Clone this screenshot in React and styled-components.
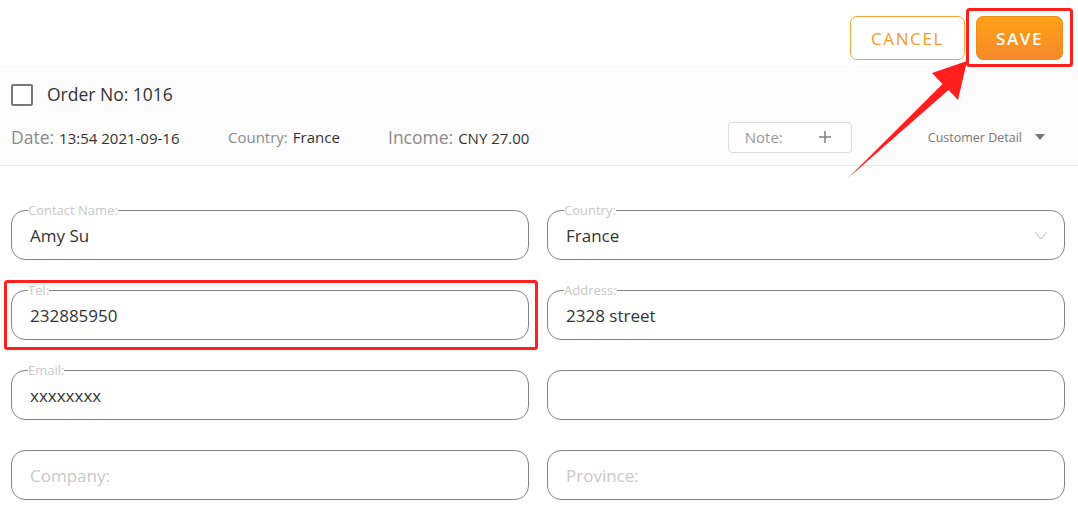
import React from "react";
import styled, { createGlobalStyle } from "styled-components";

const Global = createGlobalStyle`
  html, body { margin: 0; padding: 0; background: #fff; }
  body { font-family: "Open Sans", "Noto Sans", Arial, sans-serif; color: #333; }
  * { box-sizing: border-box; }
`;

const Page = styled.div`
  position: relative;
  width: 1078px;
  height: 511px;
  overflow: hidden;
  background: #fff;
`;

const TopBar = styled.div`
  height: 65px;
  display: flex;
  align-items: flex-start;
  justify-content: flex-end;
  gap: 11px;
  padding: 16px 15px 0 0;
  background: #fff;
`;

const Button = styled.button`
  height: 44px;
  width: ${(p) => p.$w}px;
  border-radius: 7px;
  font-family: "Open Sans", sans-serif;
  font-size: 17px;
  letter-spacing: 1.6px;
  cursor: pointer;
  border: 1px solid ${(p) => (p.$primary ? "#f08c1c" : "#f5a53a")};
  color: ${(p) => (p.$primary ? "#fff" : "#f59b2a")};
  font-weight: ${(p) => (p.$primary ? 600 : 400)};
  background: ${(p) =>
    p.$primary ? "linear-gradient(180deg, #ffa216 0%, #f6882a 100%)" : "#fff"};
  padding: 0;
`;

const Header = styled.div`
  height: 101px;
  background: #fcfcfc;
  border-bottom: 1px solid #e6e6e6;
  padding: 19px 11px 0 11px;
`;

const OrderRow = styled.div`
  display: flex;
  align-items: center;
  gap: 14px;
  height: 22px;
`;

const CheckBox = styled.span`
  width: 22px;
  height: 22px;
  border: 2px solid #777;
  border-radius: 2px;
  background: #fff;
  display: inline-block;
`;

const OrderTitle = styled.span`
  font-size: 17.5px;
  font-weight: 500;
  color: #333;
  margin-top: -2px;
`;

const InfoRow = styled.div`
  display: flex;
  align-items: center;
  margin-top: 15px;
  height: 32px;
`;

const Info = styled.div`
  display: flex;
  align-items: baseline;
  gap: 5px;
  width: ${(p) => p.$w}px;
`;

const InfoLabel = styled.span`
  font-size: ${(p) => p.$size}px;
  color: #8a8a8a;
`;

const InfoValue = styled.span`
  font-size: 15px;
  color: #333;
`;

const Spacer = styled.div`
  flex: 1;
`;

const NoteBox = styled.div`
  width: 124px;
  height: 31px;
  border: 1px solid #dcdcdc;
  border-radius: 4px;
  background: #fff;
  display: flex;
  align-items: center;
  justify-content: space-between;
  padding: 0 20px 0 16px;
  margin-right: 76px;
`;

const NoteText = styled.span`
  font-size: 15px;
  color: #999;
`;

const DetailToggle = styled.div`
  display: flex;
  align-items: center;
  gap: 13px;
  margin-right: 22px;
  font-size: 12.5px;
  color: #777;
`;

const Caret = styled.span`
  width: 0;
  height: 0;
  border-left: 5px solid transparent;
  border-right: 5px solid transparent;
  border-top: 6px solid #777;
`;

const Form = styled.div`
  display: grid;
  grid-template-columns: 518px 518px;
  column-gap: 18px;
  row-gap: 22px;
  padding: 36px 13px 0 11px;
`;

const Cell = styled.div`
  height: 58px;
  display: flex;
  flex-direction: column;
  justify-content: flex-end;
`;

const Box = styled.fieldset`
  margin: 0;
  padding: 0 16px;
  border: 1px solid #858585;
  border-radius: 14px;
  display: flex;
  align-items: center;
  min-width: 0;
`;

const Legend = styled.legend`
  padding: 0;
  font-size: 13px;
  line-height: 14px;
  color: #c8c8c8;
`;

const Input = styled.input`
  flex: 1;
  height: ${(p) => (p.$labeled ? 42 : 48)}px;
  border: none;
  outline: none;
  background: transparent;
  padding: 0 2px ${(p) => (p.$labeled ? 5 : 0)}px 2px;
  font-family: "Open Sans", sans-serif;
  font-size: 17px;
  color: #333;
  min-width: 0;
  &::placeholder { color: #c8c8c8; }
`;

const Overlay = styled.svg`
  position: absolute;
  left: 0;
  top: 0;
  pointer-events: none;
`;

const Chevron = () => (
  <svg width="14" height="9" viewBox="0 0 14 9" style={{ marginBottom: 5 }}>
    <polyline points="1,1 7,8 13,1" fill="none" stroke="#bdbdbd" strokeWidth="1" />
  </svg>
);

const Plus = () => (
  <svg width="12" height="12" viewBox="0 0 12 12">
    <line x1="6" y1="0" x2="6" y2="12" stroke="#888" strokeWidth="1.6" />
    <line x1="0" y1="6" x2="12" y2="6" stroke="#888" strokeWidth="1.6" />
  </svg>
);

const Field = ({ label, value, placeholder, select }) => (
  <Cell>
    <Box>
      {label && <Legend>{label}</Legend>}
      <Input $labeled={!!label} defaultValue={value} placeholder={placeholder} readOnly />
      {select && <Chevron />}
    </Box>
  </Cell>
);

export default function App() {
  return (
    <Page>
      <Global />
      <TopBar>
        <Button $w={115}>CANCEL</Button>
        <Button $w={87} $primary>SAVE</Button>
      </TopBar>
      <Header>
        <OrderRow>
          <CheckBox />
          <OrderTitle>Order No: 1016</OrderTitle>
        </OrderRow>
        <InfoRow>
          <Info $w={217}>
            <InfoLabel $size={17.5}>Date:</InfoLabel>
            <InfoValue>13:54 2021-09-16</InfoValue>
          </Info>
          <Info $w={160}>
            <InfoLabel $size={15}>Country:</InfoLabel>
            <InfoValue>France</InfoValue>
          </Info>
          <Info $w={200}>
            <InfoLabel $size={17.5}>Income:</InfoLabel>
            <InfoValue>CNY 27.00</InfoValue>
          </Info>
          <Spacer />
          <NoteBox>
            <NoteText>Note:</NoteText>
            <Plus />
          </NoteBox>
          <DetailToggle>
            Customer Detail
            <Caret />
          </DetailToggle>
        </InfoRow>
      </Header>
      <Form>
        <Field label="Contact Name:" value="Amy Su" />
        <Field label="Country:" value="France" select />
        <Field label="Tel:" value="232885950" />
        <Field label="Address:" value="2328 street" />
        <Field label="Email:" value="xxxxxxxx" />
        <Field value="" />
        <Field placeholder="Company:" />
        <Field placeholder="Province:" />
      </Form>
      <Overlay width="1078" height="511" viewBox="0 0 1078 511">
        <rect x="967.5" y="9.5" width="104" height="56" fill="none" stroke="#ff1f1f" strokeWidth="3" rx="2" />
        <rect x="5.5" y="281.5" width="531" height="67" fill="none" stroke="#ff1f1f" strokeWidth="3" rx="2" />
        <polygon
          points="847,179 942.5,84 932,73 967,61 958,100 948.5,90"
          fill="#ff1f1f"
        />
      </Overlay>
    </Page>
  );
}
